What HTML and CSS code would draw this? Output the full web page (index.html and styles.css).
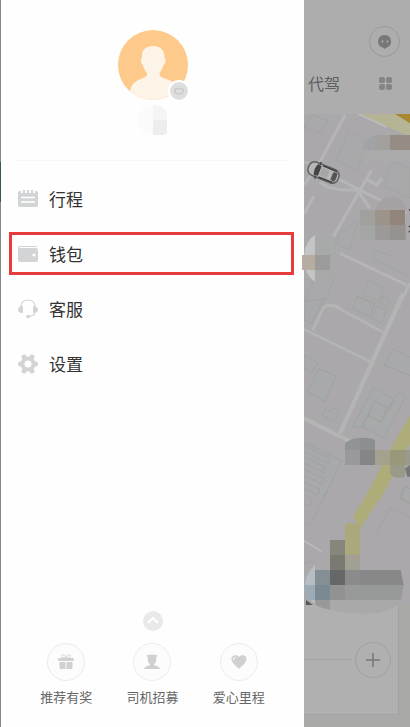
FILE: index.html
```html
<!DOCTYPE html>
<html lang="zh-CN">
<head>
    <meta charset="UTF-8">
    <meta name="viewport" content="width=device-width, initial-scale=1">
    <title>个人中心</title>
    <link rel="stylesheet" href="styles.css">
</head>
<body>

<div class="app">
    <aside class="drawer">
        <div class="profile">
            <div class="avatar">
                <svg viewBox="0 0 70 70" width="70" height="70">
                    <defs><clipPath id="avatarClip"><circle cx="35" cy="35" r="35"/></clipPath></defs>
                    <circle cx="35" cy="35" r="35" fill="#fdca8b"/>
                    <path clip-path="url(#avatarClip)" fill="#fcf5e7" d="M35 16c7 0 12 4 11.500 12 2 1 1 6-1 7-1 4-2.500 6-4 8 0 3 1 4 4 5 8 3 13 4 14 14v10H12V62c1-8 5-11 13-14 3-1 4.500-2 4-5-2-2-3-4-4-8-2-1-3-6-1-7-1-8 4-12 11-12z"/>
                </svg>
                <span class="avatar-badge">
                    <svg viewBox="0 0 18 18" width="18" height="18">
                        <path d="M5 7q4-1 8 0v2c0 2-2 3-4 3s-4-1-4-3z" fill="none" stroke="#cacaca" stroke-width="1.500" stroke-linejoin="round"/>
                    </svg>
                </span>
            </div>
            <svg class="profile-name" viewBox="0 0 30 30" width="30" height="30">
                <path d="M15 0A15 15 0 0 0 15 30z" fill="#fbfbfb"/>
                <path d="M15 0q10 0 14 8v7H15z" fill="#f5f5f5"/>
                <path d="M15 15h14v13q-2 2-4 2H15z" fill="#ededed"/>
            </svg>
        </div>

        <nav class="menu">
            <a class="menu-item" href="#trips">
                <svg viewBox="0 0 20 20" width="20" height="20">
                    <path fill="#d3d4d6" d="M2 2h1v2h2V1h2v3h2V1h2v3h2V1h2v3h2V2h1q2 0 2 2v12q0 2-2 2H2q-2 0-2-2V4q0-2 2-2z"/>
                    <path d="M3 8.500h14M3 13h14" stroke="#fff" stroke-width="1.500"/>
                </svg>
                <span>行程</span>
            </a>
            <a class="menu-item active" href="#wallet">
                <svg viewBox="0 0 20 20" width="20" height="20">
                    <path fill="#d3d4d6" d="M2 2h16q1 0 1 1H2q-1 1 0 1h16q2 0 2 2v10q0 2-2 2H2q-2 0-2-2V4q0-2 2-2z"/>
                    <circle cx="16" cy="11" r="1.600" fill="#fff"/>
                </svg>
                <span>钱包</span>
            </a>
            <a class="menu-item" href="#service">
                <svg viewBox="0 0 20 20" width="20" height="20">
                    <path d="M3 8C3 3 6 1 10 1s7 2 7 7M17 14q-1 3-6 3" fill="none" stroke="#d3d4d6" stroke-width="1.200"/>
                    <path fill="#d3d4d6" d="M5 7v7Q0 14 0 10.500T5 7zM15 7v7q5 0 5-3.500T15 7z"/>
                    <rect x="8" y="16" width="4" height="3" rx="1.500" fill="#d3d4d6"/>
                </svg>
                <span>客服</span>
            </a>
            <a class="menu-item" href="#settings">
                <svg viewBox="0 0 20 20" width="20" height="20">
                    <circle cx="10" cy="10" r="7.500" fill="#d3d4d6"/>
                    <path d="M6 3l8 14M14 3L6 17M2.500 10h15" stroke="#d3d4d6" stroke-width="5" stroke-linecap="round"/>
                    <circle cx="10" cy="10" r="3.500" fill="#fff"/>
                </svg>
                <span>设置</span>
            </a>
        </nav>

        <div class="drawer-bottom">
            <button class="expand" type="button" aria-label="展开">
                <svg viewBox="0 0 20 20" width="20" height="20">
                    <path d="M5 12l5-5 5 5" fill="none" stroke="#fff" stroke-width="2"/>
                </svg>
            </button>
            <div class="shortcuts">
                <a class="shortcut" href="#invite">
                    <span class="shortcut-icon">
                        <svg viewBox="0 0 16 16" width="16" height="16">
                            <path fill="#cfd0d2" d="M0 5.500Q0 4 1 4h14q1 0 1 1.500T15 7H1Q0 7 0 5.500zM1.500 8h6v7H2.500q-1 0-1-1zM8.500 8h6v6q0 1-1 1h-5z"/>
                            <path d="M8 4C7 0 3 0 3.500 2.500 4 4 6 4 8 4zM8 4c1-4 5-4 4.500-1.500C12 4 10 4 8 4z" fill="none" stroke="#cfd0d2"/>
                        </svg>
                    </span>
                    <span>推荐有奖</span>
                </a>
                <a class="shortcut" href="#driver">
                    <span class="shortcut-icon">
                        <svg viewBox="0 0 16 16" width="16" height="16">
                            <path fill="#cfd0d2" d="M3 1q5-1 10 0v2l-1 1q1 4-2 6v1l5 2 1 2H0l1-2 5-2v-1Q3 8 4 4L3 3z"/>
                        </svg>
                    </span>
                    <span>司机招募</span>
                </a>
                <a class="shortcut" href="#charity">
                    <span class="shortcut-icon">
                        <svg viewBox="0 0 16 16" width="16" height="16">
                            <path fill="#cfd0d2" d="M8 3c2-3 8-2 7.500 2.500C15 9 11 12 8 15 5 12 1 9 .5 5.500 0 1 6 0 8 3z"/>
                            <path d="M2.500 6q0-2.500 2-3" fill="none" stroke="#fff"/>
                        </svg>
                    </span>
                    <span>爱心里程</span>
                </a>
            </div>
        </div>
    </aside>

    <main class="home">
        <header class="topbar">
            <button class="round-btn message" type="button" aria-label="消息">
                <svg viewBox="0 0 14 14" width="14" height="14">
                    <path fill="#787878" d="M7 0a6.500 6.500 0 0 1 2 12.500L6 14v-1A6.500 6.500 0 0 1 7 0z"/>
                    <circle cx="4.500" cy="6.500" r="1" fill="#b0b0b0"/><circle cx="9.500" cy="6.500" r="1" fill="#b0b0b0"/>
                </svg>
            </button>
            <div class="tabs">
                <a href="#chauffeur">代驾</a>
                <button class="more" type="button" aria-label="更多">
                    <svg viewBox="0 0 13 13" width="13" height="13" fill="#858585">
                        <rect width="6" height="6" rx="2"/><rect x="7" width="6" height="6" rx="2"/>
                        <rect y="7" width="6" height="6" rx="2"/><rect x="7" y="7" width="6" height="6" rx="2"/>
                    </svg>
                </button>
            </div>
        </header>

        <section class="map">
            <svg class="map-layer" viewBox="304 114 106 613" preserveAspectRatio="xMinYMin slice">
                <!-- north part -->
                <g transform="translate(290 110) scale(.33333)" fill="none">
                    <path d="M200 10L360 80V10z" fill="#b5b596"/>
                    <path d="M315 12h45v28z" fill="#a9872f"/>
                    <path d="M205 12l85 40" stroke="#bcbcc0" stroke-width="5"/>
                    <g stroke="#b5b4b6" stroke-width="9">
                        <path d="M165 15L85 165 42 225M42 155L190 230 350 310M245 180L130 380M90 215q25 27 100 25l20 5M72 258L42 312M230 208l30 17 15-20M205 245l35 50"/>
                        <path d="M150 430L350 525M360 520L300 640M90 600q20-25 60-5"/>
                    </g>
                    <g stroke="#9fa09f" stroke-width="2" fill="#a9a9ab">
                        <path d="M42 55l25-42 48 22-27 33-46-20zM175 65l60 30-35 88-62-32zM310 155l-30 70 80 40v-90zM150 370l55-40-25 90-45-20zM258 420l-12 25 105 52M258 420l50 20M235 512l50 22-18 40-48-20zM205 558l50 20-14 36-50-20zM90 470l48 25-45 105-50-25zM280 560l20 8-8 24-20-8z"/>
                    </g>
                </g>
                <!-- middle part -->
                <g transform="translate(290 300) scale(.33333)" fill="none">
                    <g stroke="#b4b4b5">
                        <path d="M68 90l30-62q10-17 35-10l155 83M42 88l205 100" stroke-width="8"/>
                        <path d="M340-20L245 190 150 400" stroke-width="13"/>
                        <path d="M42 355l140 70" stroke-width="12"/>
                    </g>
                    <g stroke="#9b9f9b" stroke-width="2" fill="#a8a9aa">
                        <path d="M65 70L42 60V5l60-10zM200-10l54 22-15 37-50-21zM262 18l28 15-15 37-30-15zM308 148l70 32-10 50-84-34zM85 207l54 20-34 78-53-30zM42 165l43 22-18 30-25-12zM105 327l15 5q5-8 16-6l12 12-16 25-36-18z"/>
                        <path d="M250 263l62 33-14 32-42-25-40 80-28-2zM256 303l35 20-20 42-38-20zM326 275l22 14-67 124-66-35 18-30 40 18z"/>
                        <path d="M42 425l113 58-55 117M42 435l80 42-6 16-74-38M42 470l65 32-6 16-59-29M42 507l60 30-6 16-54-27M42 545l48 24-6 16-42-20"/>
                        <path d="M345 560l30 12-12 40-32-15z"/>
                    </g>
                    <path d="M360 345L300 450 222 600h48L360 430z" fill="#aeac79"/>
                </g>
                <!-- south part -->
                <g transform="translate(290 490) scale(.33333)" fill="none" stroke="#9b9f9b" stroke-width="2">
                    <path d="M238 0l-50 82 26 30L285 0z" fill="#aeac79" stroke="none"/>
                    <path d="M112 0L60 110l-18-12M42 15l25 12-8 22-17-8M340-5l-13 25 35 18M255 138l45-83 60 27M42 225q20-20 30 0"/>
                    <path d="M42 152l53 32" stroke="#bdbdbf" stroke-width="4"/>
                    <path d="M42 375L120 355 330 340l30 5v400H42z" fill="#a9a9a8" stroke="none"/>
                </g>
            </svg>

            <div class="trip-card">
                <div class="trip-line"></div>
                <button class="round-btn" type="button" aria-label="添加">
                    <svg viewBox="0 0 16 16" width="16" height="16">
                        <path d="M8 1v14M1 8h14" stroke="#777" stroke-width="1.500"/>
                    </svg>
                </button>
            </div>

            <!-- markers and blurred place names lie over the map and the card -->
            <svg class="map-layer labels" viewBox="304 114 106 613" preserveAspectRatio="xMinYMin slice">
                <g transform="translate(323.500 172.500) rotate(22)">
                    <rect x="-16" y="-7" width="32" height="14" rx="6" fill="#b7b7b7" stroke="#626262" stroke-width="1.500"/>
                    <path d="M-8-6l4 1v10l-4 1q-3-6 0-12z" fill="#444"/>
                    <path d="M-3-6H12M-3 6H12M-6-9v3M-6 9V6" stroke="#444" stroke-width="1.500"/>
                    <rect x="-3" y="-4" width="8" height="8" fill="#a5a5a5"/>
                    <path d="M9-4l4-1q2 5 0 10l-4-1z" fill="#555"/>
                </g>
                <g transform="translate(290 110) scale(.33333)">
                    <path d="M215 120q5-32 40-45v45z" fill="#a2a3a4"/>
                    <path d="M215 120h145v35H225z" fill="#aaaaab"/>
                    <path d="M255 75h45v45h-45z" fill="#a1a09c"/><path d="M300 75h60v45h-60z" fill="#958c84"/>
                    <path d="M255 300q10-40 55-40 35 5 38 40z" fill="#a4a2a3"/>
                    <path d="M210 300h45v45h-45z" fill="#a0a09f"/><path d="M255 300h45v45h-45z" fill="#9c938b"/>
                    <path d="M300 300h45v45h-45z" fill="#91857c"/><path d="M210 345h45v45h-45z" fill="#a4a5a5"/>
                    <path d="M255 345h45v45h-45z" fill="#9b9a98"/><path d="M300 345h47v45h-47z" fill="#96928f"/>
                    <path d="M357 297h3v5h-3zM356 347h4v5h-4zM356 362h4v5h-4z" fill="#444"/>
                    <path d="M75 375q-33 20-33 70t33 70z" fill="#c3c4c4"/>
                    <path d="M75 375q50-5 65 45v80H75z" fill="#a8a9a9"/>
                    <path d="M36 435h39v45H36z" fill="#b7aca1"/><path d="M75 435h45v45H75z" fill="#9b9b99"/>
                </g>
                <g transform="translate(290 300) scale(.33333)">
                    <path d="M165 450v-20q20-16 45-16v36z" fill="#929394"/><path d="M210 414q30-2 45 6v30h-45z" fill="#8d8e90"/>
                    <path d="M165 450h45v45h-45z" fill="#99999b"/><path d="M210 450h45v45h-45z" fill="#858588"/>
                    <path d="M255 450h45v45h-45z" fill="#a3a28e"/><path d="M300 450h45v45h-45z" fill="#9a987b"/>
                    <path d="M300 495h45v35q-35 10-45-12z" fill="#9a9a88"/><path d="M345 450h15v45h-15z" fill="#9a9a8c"/>
                    <path d="M345 505l15-10v35h-8z" fill="#777"/>
                </g>
                <g transform="translate(290 490) scale(.33333)">
                    <path d="M75 240V225q-33 30-30 70 5 30 30 48z" fill="#b7bdc5"/>
                    <path d="M43 285h32v45H50z" fill="#9cabb5"/>
                    <path d="M75 240h45v45H75z" fill="#858e95"/><path d="M75 285h45v45H75z" fill="#7b8992"/>
                    <path d="M75 330h45v29q-27-3-45-16z" fill="#999999"/>
                    <path d="M120 150h45v45h-45z" fill="#86867d"/><path d="M120 195h45v45h-45z" fill="#7a7a72"/>
                    <path d="M120 240h45v45h-45z" fill="#666767"/><path d="M120 285h45v45h-45z" fill="#929292"/>
                    <path d="M165 100h45v95h-45z" fill="#aba97c"/><path d="M165 195h45v45h-45z" fill="#a29f94"/>
                    <path d="M165 240h45v45h-45z" fill="#8b8b8b"/><path d="M210 240h122l9 45H210z" fill="#888889"/>
                    <path d="M165 285h176l-8 45H165z" fill="#989999"/>
                    <path d="M120 330h213q-25 40-100 41-70 0-113-12z" fill="#a9a9a9"/>
                    <path d="M48 330l20 15H48z" fill="#555"/>
                </g>
            </svg>
        </section>
    </main>
</div>

</body>
</html>
```
FILE: styles.css
```css
* {
  box-sizing: border-box;
}

body {
  margin: 0;
  font-family: "Noto Sans CJK SC", sans-serif;
  color: #333;
  background: #fff;
}

svg {
  display: block;
  flex-shrink: 0;
}

a {
  color: inherit;
  text-decoration: none;
}

button {
  padding: 0;
  border: none;
  background: none;
  cursor: pointer;
}

.app {
  display: grid;
  grid-template-columns: minmax(0, 152fr) minmax(0, 53fr);
  min-height: 100vh;
  overflow: hidden;
}

/* === Drawer === */
.drawer {
  display: flex;
  flex-direction: column;
  padding-left: 1px;
  /* thin strip of the page left of the drawer */
  background: linear-gradient(#888 162px, #2d6041 162px, #2d6041 202px, #888 202px) left / 1px 100% no-repeat, #fefefe;
}

.profile {
  display: flex;
  flex-direction: column;
  align-items: center;
  gap: 5px;
  height: 161px;
  margin: 0 16px;
  padding-top: 30px;
  border-bottom: 1px solid #f6f6f6;
}

.avatar {
  position: relative;
}

.avatar-badge {
  position: absolute;
  right: -2px;
  bottom: -2px;
  border: 2px solid #fff;
  border-radius: 50%;
  background: #dedede;
}

.menu {
  display: flex;
  flex-direction: column;
  gap: 12px;
  padding: 16px 10px 0 8px;
}

.menu-item {
  display: flex;
  align-items: center;
  gap: 11px;
  height: 43px;
  padding: 0 6px;
  border: 3px solid transparent;
  font-size: 17px;
  line-height: 24px;
}

.menu-item.active {
  border-color: #e83c3c;
}

.drawer-bottom {
  display: flex;
  flex-direction: column;
  align-items: center;
  gap: 12px;
  margin-top: auto;
  padding: 0 22px 20px;
}

.expand {
  border-radius: 50%;
  background: #e9e9e9;
}

.shortcuts {
  display: grid;
  grid-template-columns: repeat(3, 1fr);
  width: 100%;
}

.shortcut {
  display: flex;
  flex-direction: column;
  align-items: center;
  gap: 6px;
  font-size: 13px;
  line-height: 20px;
  color: #666;
  white-space: nowrap;
}

.shortcut-icon {
  display: flex;
  align-items: center;
  justify-content: center;
  width: 38px;
  height: 38px;
  border: 1px solid #ececec;
  border-radius: 50%;
  background: #fcfcfd;
}

/* === Dimmed home page === */
.home {
  display: flex;
  flex-direction: column;
  background: #adadad;
}

.topbar {
  display: flex;
  flex-direction: column;
  align-items: flex-end;
  gap: 14px;
  height: 114px;
  padding: 26px 10px 0 4px;
}

.round-btn {
  display: flex;
  align-items: center;
  justify-content: center;
  flex-shrink: 0;
  width: 36px;
  height: 36px;
  border: 1px solid #a0a0a0;
  border-radius: 50%;
}

.message {
  width: 31px;
  height: 31px;
  border-color: #999;
}

.tabs {
  display: flex;
  align-items: center;
  justify-content: space-between;
  width: 100%;
  padding-right: 8px;
  font-size: 16px;
  line-height: 24px;
  color: #606060;
}

.map {
  position: relative;
  display: flex;
  flex: 1;
  flex-direction: column;
  justify-content: flex-end;
  padding: 0 11px 12px 0;
  background: #aaa8ab;
}

.map-layer {
  position: absolute;
  top: 0;
  left: 0;
  width: 100%;
  height: 100%;
}

.labels {
  overflow: visible;
  pointer-events: none;
}

.trip-card {
  position: relative;
  display: flex;
  align-items: center;
  gap: 4px;
  height: 110px;
  padding-right: 7px;
  border: solid #a2a2a2;
  border-width: 0 1px 1px 0;
  background: #b0b0b0;
}

.trip-line {
  flex: 1;
  height: 1px;
  background: #a3a3a3;
}
```
